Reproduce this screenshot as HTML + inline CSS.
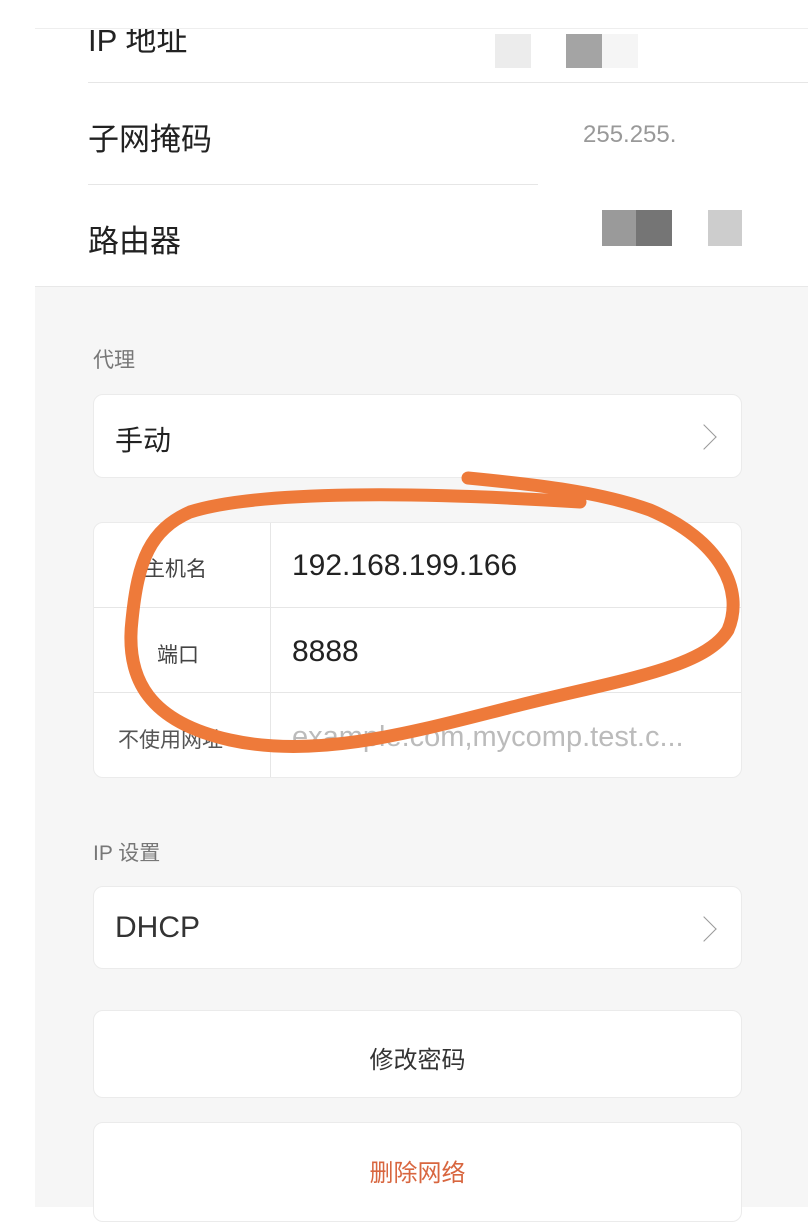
<!DOCTYPE html>
<html><head><meta charset="utf-8"><style>
body{margin:0;width:808px;height:1206px;overflow:hidden;background:#fff;font-family:"Liberation Sans","Noto Sans CJK SC",sans-serif;position:relative}
.abs{position:absolute}
.gray{position:absolute;left:35px;top:286px;width:773px;height:920px;background:#f6f6f6;border-top:1px solid #e8e8e8}
.card{position:absolute;left:93px;width:649px;background:#fff;border:1px solid #ebebeb;border-radius:10px;box-sizing:border-box}
.t{position:absolute;color:#222;font-size:31px;white-space:nowrap}
.line{position:absolute;height:1px;background:#e6e6e6}
.chev{position:absolute;right:28px;width:17px;height:17px;border-right:1.5px solid #999;border-top:1.5px solid #999;transform:rotate(45deg)}
</style></head><body>
<div class="line" style="left:35px;top:28px;width:773px;background:#eee"></div>
<div class="abs" style="left:88px;top:29px;width:200px;height:40px;overflow:hidden"><div class="t" style="left:0;top:-14px">IP 地址</div></div>
<div class="abs" style="left:495px;top:34px;width:36px;height:34px;background:#ececec"></div>
<div class="abs" style="left:566px;top:34px;width:36px;height:34px;background:#a4a4a4"></div>
<div class="abs" style="left:602px;top:34px;width:36px;height:34px;background:#f5f5f5"></div>
<div class="line" style="left:88px;top:82px;width:720px"></div>
<div class="t" style="left:88px;top:114px">子网掩码</div>
<div class="abs" style="left:583px;top:121px;font-size:24px;color:#999">255.255.</div>
<div class="line" style="left:88px;top:184px;width:450px"></div>
<div class="t" style="left:88px;top:216px">路由器</div>
<div class="abs" style="left:602px;top:210px;width:34px;height:36px;background:#9a9a9a"></div>
<div class="abs" style="left:636px;top:210px;width:36px;height:36px;background:#757575"></div>
<div class="abs" style="left:708px;top:210px;width:34px;height:36px;background:#cdcdcd"></div>
<div class="gray"></div>
<div class="abs" style="left:93px;top:344px;font-size:21px;color:#777">代理</div>
<div class="card" style="top:394px;height:84px"><div class="t" style="left:21px;top:24px;font-size:28px">手动</div><div class="chev" style="top:33px"></div></div>
<div class="card" style="top:522px;height:256px">
<div class="line" style="left:0;top:84px;width:647px"></div>
<div class="line" style="left:0;top:169px;width:647px"></div>
<div class="abs" style="left:176px;top:0;width:1px;height:254px;background:#e6e6e6"></div>
<div class="abs" style="left:50px;top:30px;font-size:21px;color:#444">主机名</div>
<div class="abs" style="left:63px;top:116px;font-size:21px;color:#444">端口</div>
<div class="abs" style="left:24px;top:201px;font-size:21px;color:#555">不使用网址</div>
<div class="t" style="left:198px;top:26px;font-size:30px">192.168.199.166</div>
<div class="t" style="left:198px;top:112px;font-size:30px">8888</div>
<div class="t" style="left:198px;top:198px;font-size:29px;color:#bbb">example.com,mycomp.test.c...</div>
</div>
<div class="abs" style="left:93px;top:837px;font-size:21px;color:#777">IP 设置</div>
<div class="card" style="top:886px;height:83px"><div class="t" style="left:21px;top:24px;font-size:30px;color:#333">DHCP</div><div class="chev" style="top:33px"></div></div>
<div class="card" style="top:1010px;height:88px"><div class="abs" style="left:0;width:100%;top:29px;text-align:center;font-size:24px;color:#333">修改密码</div></div>
<div class="card" style="top:1122px;height:100px"><div class="abs" style="left:0;width:100%;top:30px;text-align:center;font-size:24px;color:#d8663f">删除网络</div></div>
<svg class="abs" style="left:0;top:0" width="808" height="1206"><path d="M468,478 C540,485 600,492 650,510 C720,540 745,590 728,630 C705,668 620,680 520,705 C420,730 320,760 230,740 C150,722 125,680 132,620 C138,560 150,530 190,512 C260,490 420,492 580,502" fill="none" stroke="#ee7a3a" stroke-width="13" stroke-linecap="round"/></svg>
</body></html>
